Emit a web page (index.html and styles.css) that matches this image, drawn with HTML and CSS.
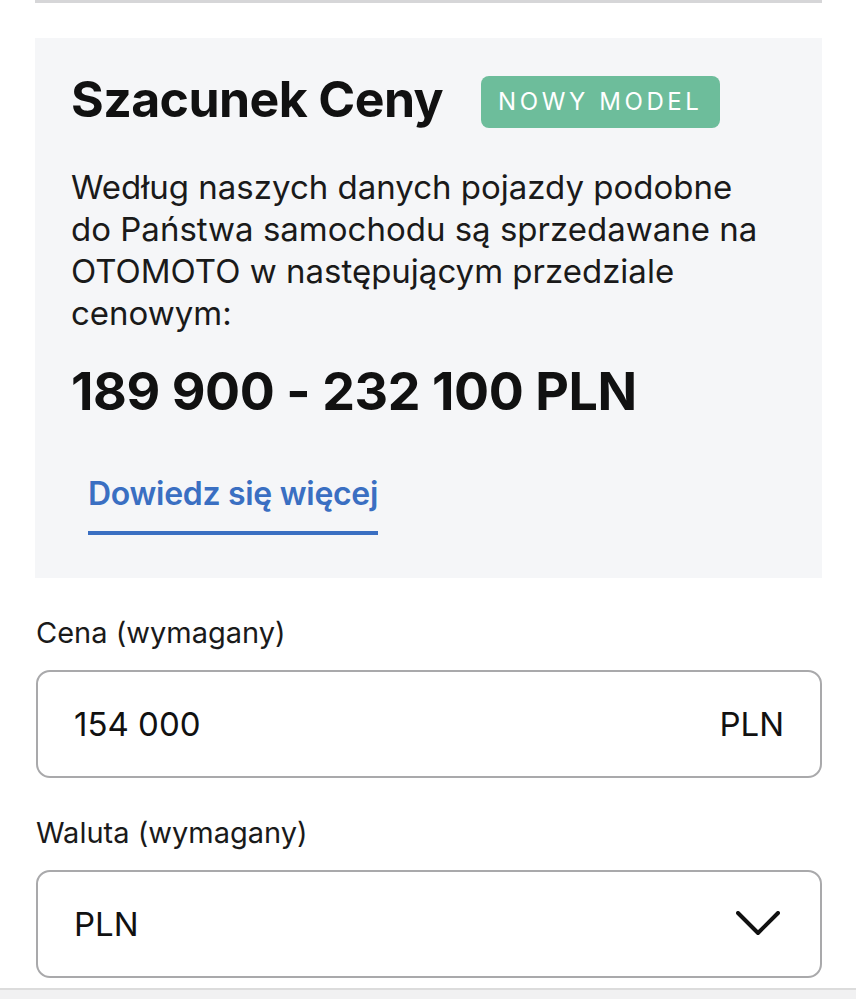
FILE: index.html
```html
<!DOCTYPE html>
<html lang="pl">

<head>
	<meta charset="UTF-8">
	<title>Szacunek Ceny</title>
	<link rel="stylesheet" href="styles.css">
</head>

<body>
	<main class="page">
		<div class="top-rule"></div>

		<!-- szacunek ceny -->
		<section class="estimate">
			<div class="estimate-head">
				<h2>Szacunek Ceny</h2>
				<span class="badge">NOWY MODEL</span>
			</div>
			<p class="estimate-text">Według naszych danych pojazdy podobne do Państwa samochodu są sprzedawane na OTOMOTO w następującym przedziale cenowym:</p>
			<p class="estimate-range">189 900 - 232 100 PLN</p>
			<a class="more-link" href="#">Dowiedz się więcej</a>
		</section>

		<div class="field">
			<label class="field-label">Cena (wymagany)</label>
			<div class="field-box">
				<span>154 000</span>
				<span>PLN</span>
			</div>
		</div>

		<div class="field">
			<label class="field-label">Waluta (wymagany)</label>
			<div class="field-box">
				<span>PLN</span>
				<svg class="chevron" width="44" height="26" viewBox="0 0 44 26">
					<path d="M2 2 L22 22 L42 2" fill="none" stroke="#111" stroke-width="4" stroke-linecap="round" stroke-linejoin="round" />
				</svg>
			</div>
		</div>
	</main>
	<div class="bottom-bar"></div>
</body>

</html>
```

FILE: styles.css
```css
body {
	margin: 0;
	background: #fff;
	color: #111;
	font-family: Inter, "Noto Sans", sans-serif;
	height: 999px;
	overflow: hidden;
}

.page {
	padding: 0 34px 0 35px;
}

.top-rule {
	height: 3px;
	background: #d6d6d8;
}

/* panel szacunku */
.estimate {
	margin-top: 35px;
	background: #f5f6f8;
	padding: 38px 36px 0 36px;
	height: 502px;
}

.estimate-head {
	display: flex;
	align-items: center;
	gap: 38px;
}

.estimate-head h2 {
	margin: 0;
	font-size: 50px;
	font-weight: 700;
	letter-spacing: -0.6px;
	line-height: 52px;
	position: relative;
	top: -3px;
}

.badge {
	background: #6dbd9b;
	color: #fff;
	border-radius: 8px;
	padding: 0 17px;
	height: 52px;
	line-height: 52px;
	font-size: 24px;
	letter-spacing: 3.6px;
	font-weight: 400;
}

.estimate-text {
	max-width: 700px;
	margin: 38px 0 0;
	font-size: 33px;
	line-height: 42px;
	color: #1a1a1a;
}

.estimate-range {
	margin: 28px 0 0;
	font-size: 52px;
	font-weight: 700;
	line-height: 60px;
	letter-spacing: -0.4px;
}

.more-link {
	display: inline-block;
	margin: 52px 0 0 17px;
	line-height: 40px;
	padding-bottom: 17px;
	border-bottom: 4px solid #3a6fc2;
	color: #3a6fc2;
	font-size: 32px;
	font-weight: 600;
	text-decoration: none;
	letter-spacing: -0.3px;
}

/* pola formularza */
.field {
	margin-top: 37px;
	padding-left: 1px;
}

.field-label {
	display: block;
	font-size: 29px;
	line-height: 36px;
	color: #1a1a1a;
}

.field-box {
	margin-top: 19px;
	height: 104px;
	border: 2px solid #a9a9ab;
	border-radius: 14px;
	display: flex;
	align-items: center;
	justify-content: space-between;
	padding: 0 36px;
	font-size: 33px;
}

.chevron {
	margin-right: 4px;
}

.bottom-bar {
	position: fixed;
	left: 0;
	right: 0;
	bottom: 0;
	height: 9px;
	background: #f1f1f2;
	border-top: 2px solid #dcdcdc;
}
```
